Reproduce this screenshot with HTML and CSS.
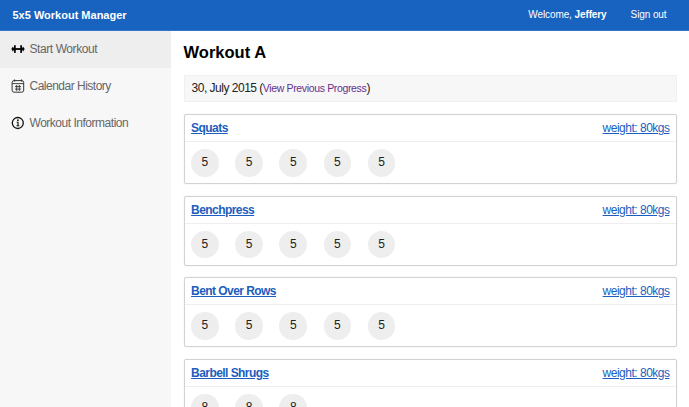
FILE: index.html
```html
<!DOCTYPE html>
<html lang="en">
<head>
<meta charset="utf-8">
<title>5x5 Workout Manager</title>
<link rel="stylesheet" href="styles.css">
</head>
<body>
<header class="topbar">
  <div class="brand">5x5 Workout Manager</div>
  <div class="welcome">Welcome, <b>Jeffery</b></div>
  <div class="signout">Sign out</div>
</header>
<div class="layout">
  <nav class="sidebar">
    <a class="item active"><svg class="icon" viewBox="0 0 14 14"><path d="M.6 7h12.8" stroke="#000" stroke-width="1.8"/><path d="M1.9 5.3v3.4M12.1 5.3v3.4" stroke="#000" stroke-width="1.2" stroke-linecap="round"/><path d="M3.9 3.8v6.4M10.1 3.8v6.4" stroke="#000" stroke-width="1.7" stroke-linecap="round"/></svg><span class="start">Start Workout</span></a>
    <a class="item"><svg class="icon" viewBox="0 0 14 14" fill="none" stroke="#333"><rect x="1.1" y="1.6" width="11.6" height="11.6" rx="2"/><path d="M1 4.6h12" stroke-width=".9"/><path d="M3.5.4v2M10.5.4v2" stroke-width="1.2"/><path d="M5.7 5.9v6M8.3 5.9v6M3.9 7.6h6.2M3.9 10.1h6.2" stroke-width=".9"/></svg><span class="calendar">Calendar History</span></a>
    <a class="item"><svg class="icon" viewBox="0 0 14 14" fill="none" stroke="#111"><circle cx="6.8" cy="7" r="5.5" stroke-width="1.3"/><path d="M5.7 6.3h1.3v3.5M5.5 9.8h2.8" stroke-width="1.1"/><circle cx="6.9" cy="4.2" r=".9" fill="#111" stroke="none"/></svg><span class="info">Workout Information</span></a>
  </nav>
  <main class="content">
    <h1>Workout A</h1>
    <div class="date">30, July 2015 (<a>View Previous Progress</a>)</div>
    <section class="card">
      <div class="head"><a class="name">Squats</a><a class="weight">weight: 80kgs</a></div>
      <div class="sets"><i>5</i><i>5</i><i>5</i><i>5</i><i>5</i></div>
    </section>
    <section class="card">
      <div class="head"><a class="name">Benchpress</a><a class="weight">weight: 80kgs</a></div>
      <div class="sets"><i>5</i><i>5</i><i>5</i><i>5</i><i>5</i></div>
    </section>
    <section class="card">
      <div class="head"><a class="name">Bent Over Rows</a><a class="weight">weight: 80kgs</a></div>
      <div class="sets"><i>5</i><i>5</i><i>5</i><i>5</i><i>5</i></div>
    </section>
    <section class="card">
      <div class="head"><a class="name">Barbell Shrugs</a><a class="weight">weight: 80kgs</a></div>
      <div class="sets"><i>8</i><i>8</i><i>8</i></div>
    </section>
  </main>
</div>
</body>
</html>
```
FILE: styles.css
```css
* { box-sizing: border-box; }
body {
  margin: 0;
  height: 407px;
  overflow: hidden;
  background: #fff;
  color: #222;
  font: 12px/14px "Liberation Sans", Arial, sans-serif;
}
.topbar {
  display: flex;
  align-items: center;
  height: 31px;
  padding: 0 22.5px 1px 12.5px;
  background: #1862c0;
  border-bottom: 1px solid #3575c8;
  color: #fff;
  font-size: 10px;
}
.brand { flex: 1; font-size: 11px; font-weight: bold; }
.welcome { margin-right: 24px; letter-spacing: -.1px; }
.signout { letter-spacing: -.1px; }
.layout { display: flex; height: 376px; }
.sidebar { width: 171px; background: #f7f7f7; }
.item {
  display: flex;
  align-items: center;
  height: 37px;
  padding: 0 0 1px 11px;
  color: #666;
}
.icon { width: 14px; height: 14px; margin-right: 4.5px; }
.active { background: #eee; }
.start { letter-spacing: -.42px; }
.calendar { letter-spacing: -.5px; }
.info { letter-spacing: -.48px; }
.content { flex: 1; padding: 12px 12px 0 12.6px; }
h1 { margin: 0 0 13px; font-size: 16.5px; line-height: 19px; color: #000; }
.date {
  height: 27px;
  padding: 5px 7px;
  margin-bottom: 12px;
  background: #f7f7f7;
  border: 1px solid #f0f0f0;
  font-size: 12px;
  letter-spacing: -.5px;
}
.date a { color: #63308c; font-size: 10.5px; letter-spacing: -.35px; }
.card {
  height: 70px;
  margin-bottom: 11.6px;
  border: 1px solid #d2d2d2;
  border-radius: 2px;
  box-shadow: 0 0 1px #ccc;
}
.head {
  display: flex;
  justify-content: space-between;
  height: 27px;
  padding: 6px 6.5px 0 6.5px;
  border-bottom: 1px solid #eee;
  color: #1b5ebe;
}
.head a { text-decoration: underline; }
.name { font-weight: bold; letter-spacing: -.56px; }
.weight { letter-spacing: -.5px; }
.sets { display: flex; gap: 16.7px; padding: 7px 7px 0 6.5px; }
.sets i {
  width: 27.5px;
  height: 27.5px;
  border-radius: 50%;
  background: #eee;
  font-style: normal;
  line-height: 27px;
  text-align: center;
}
```
